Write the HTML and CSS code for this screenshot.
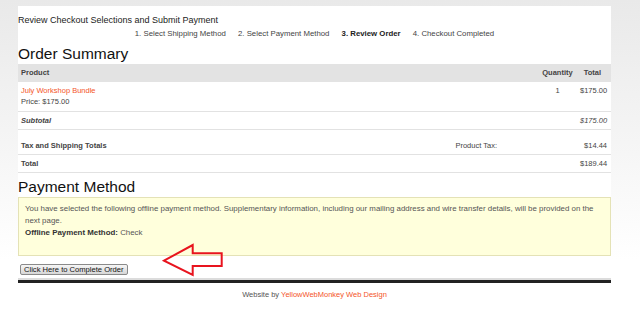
FILE: index.html
```html
<!DOCTYPE html>
<html>
<head>
<meta charset="UTF-8">
<title>Review Order</title>
<link rel="stylesheet" href="styles.css">
</head>
<body>
	<div class="page">
		<div class="title">Review Checkout Selections and Submit Payment</div>
		<div class="steps">
			<span>1. Select Shipping Method</span>
			<span>2. Select Payment Method</span>
			<span class="current">3. Review Order</span>
			<span>4. Checkout Completed</span>
		</div>

		<h2>Order Summary</h2>
		<table class="summary">
			<colgroup>
				<col>
				<col class="col-qty">
				<col class="col-total">
			</colgroup>
			<tr class="head">
				<th class="product">Product</th>
				<th class="qty">Quantity</th>
				<th class="total">Total</th>
			</tr>
			<tr class="item">
				<td><a href="#">July Workshop Bundle</a><br>Price: $175.00</td>
				<td class="qty">1</td>
				<td class="total">$175.00</td>
			</tr>
			<tr class="subtotal">
				<td><b><i>Subtotal</i></b></td>
				<td></td>
				<td class="total"><i>$175.00</i></td>
			</tr>
			<tr class="taxes">
				<td><div class="tax-line"><b>Tax and Shipping Totals</b><span class="tax-label">Product Tax:</span></div></td>
				<td></td>
				<td class="total">$14.44</td>
			</tr>
			<tr class="grand">
				<td><b>Total</b></td>
				<td></td>
				<td class="total">$189.44</td>
			</tr>
		</table>

		<h2 class="pay-title">Payment Method</h2>
		<div class="notice">
			You have selected the following offline payment method. Supplementary information, including our mailing address and wire transfer details, will be provided on the next page.<br>
			<b>Offline Payment Method:</b> Check
		</div>

		<button type="button" class="complete">Click Here to Complete Order</button>

		<div class="bar"></div>
		<div class="footer">Website by <a href="#">YellowWebMonkey Web Design</a></div>
	</div>

	<svg class="arrow" width="80" height="40" viewBox="0 0 80 40">
		<path d="M14 20.7 L42.7 5 L42.7 13.3 L71.7 13.3 L71.7 26 L42.7 26 L42.7 35 Z" fill="none" stroke="#e8141e" stroke-width="2" stroke-linejoin="miter"/>
	</svg>
</body>
</html>
```
FILE: styles.css
```css
html, body {
	margin: 0;
	padding: 0;
}

body {
	background: linear-gradient(#e9e9e9, #ffffff 260px);
	font-family: "Liberation Sans", Arial, sans-serif;
	min-height: 309px;
}

.page {
	width: 593px;
	margin: 6px 0 0 18px;
	background: #fff;
	padding-top: 8px;
}

.title {
	font-size: 9px;
	line-height: 12px;
	color: #222;
}

.steps {
	margin-top: 2px;
	font-size: 7.8px;
	line-height: 12px;
	color: #444;
	text-align: center;
}

.steps span {
	margin: 0 5px;
}

.steps .current {
	font-weight: bold;
	color: #222;
}

h2 {
	margin: 5px 0 1px;
	font-size: 15.5px;
	line-height: 18px;
	font-weight: normal;
	color: #111;
}

.summary {
	width: 593px;
	border-collapse: collapse;
	table-layout: fixed;
	font-size: 7.5px;
	color: #444;
}

.col-qty {
	width: 39px;
}

.col-total {
	width: 34px;
}

.summary th,
.summary td {
	padding: 4px 3px 3px;
	line-height: 10px;
	vertical-align: top;
}

.summary th {
	background: #e3e3e3;
	font-weight: bold;
	text-align: left;
	padding-bottom: 4px;
}

.summary td {
	border-bottom: 1px solid #e2e2e2;
}

.summary .qty {
	text-align: center;
}

.summary .total {
	text-align: right;
	padding-right: 4px;
}

.summary th.total {
	padding-right: 10px;
}

.summary .item td {
	line-height: 10.5px;
	padding-bottom: 4px;
}

.summary a {
	color: #f4552a;
	text-decoration: none;
}

.summary .taxes td {
	padding-top: 11px;
}

.tax-line {
	display: flex;
	justify-content: space-between;
}

.tax-label {
	margin-right: 38px;
}

.pay-title {
	margin-bottom: 1px;
}

.notice {
	background: #ffffdc;
	border: 1px solid #e4e2b6;
	padding: 5px 6px 16px;
	font-size: 7.9px;
	line-height: 12px;
	color: #555;
}

.notice b {
	color: #333;
}

.complete {
	display: block;
	margin: 8px 0 0 2px;
	height: 11px;
	padding: 0 3px;
	font-family: "Liberation Sans", Arial, sans-serif;
	font-size: 7.6px;
	line-height: 9px;
	color: #111;
	background: linear-gradient(#f6f6f6, #d6d6d6);
	border: 1px solid #8a8a8a;
	border-radius: 2px;
}

.bar {
	margin-top: 3px;
	height: 3px;
	background: #222;
	border-top: 2px solid #dcdcdc;
}

.footer {
	padding: 6px 0 12px;
	font-size: 7.5px;
	line-height: 12px;
	color: #555;
	text-align: center;
}

.footer a {
	color: #f4552a;
	text-decoration: none;
}

.arrow {
	position: absolute;
	left: 150px;
	top: 240px;
}
```
